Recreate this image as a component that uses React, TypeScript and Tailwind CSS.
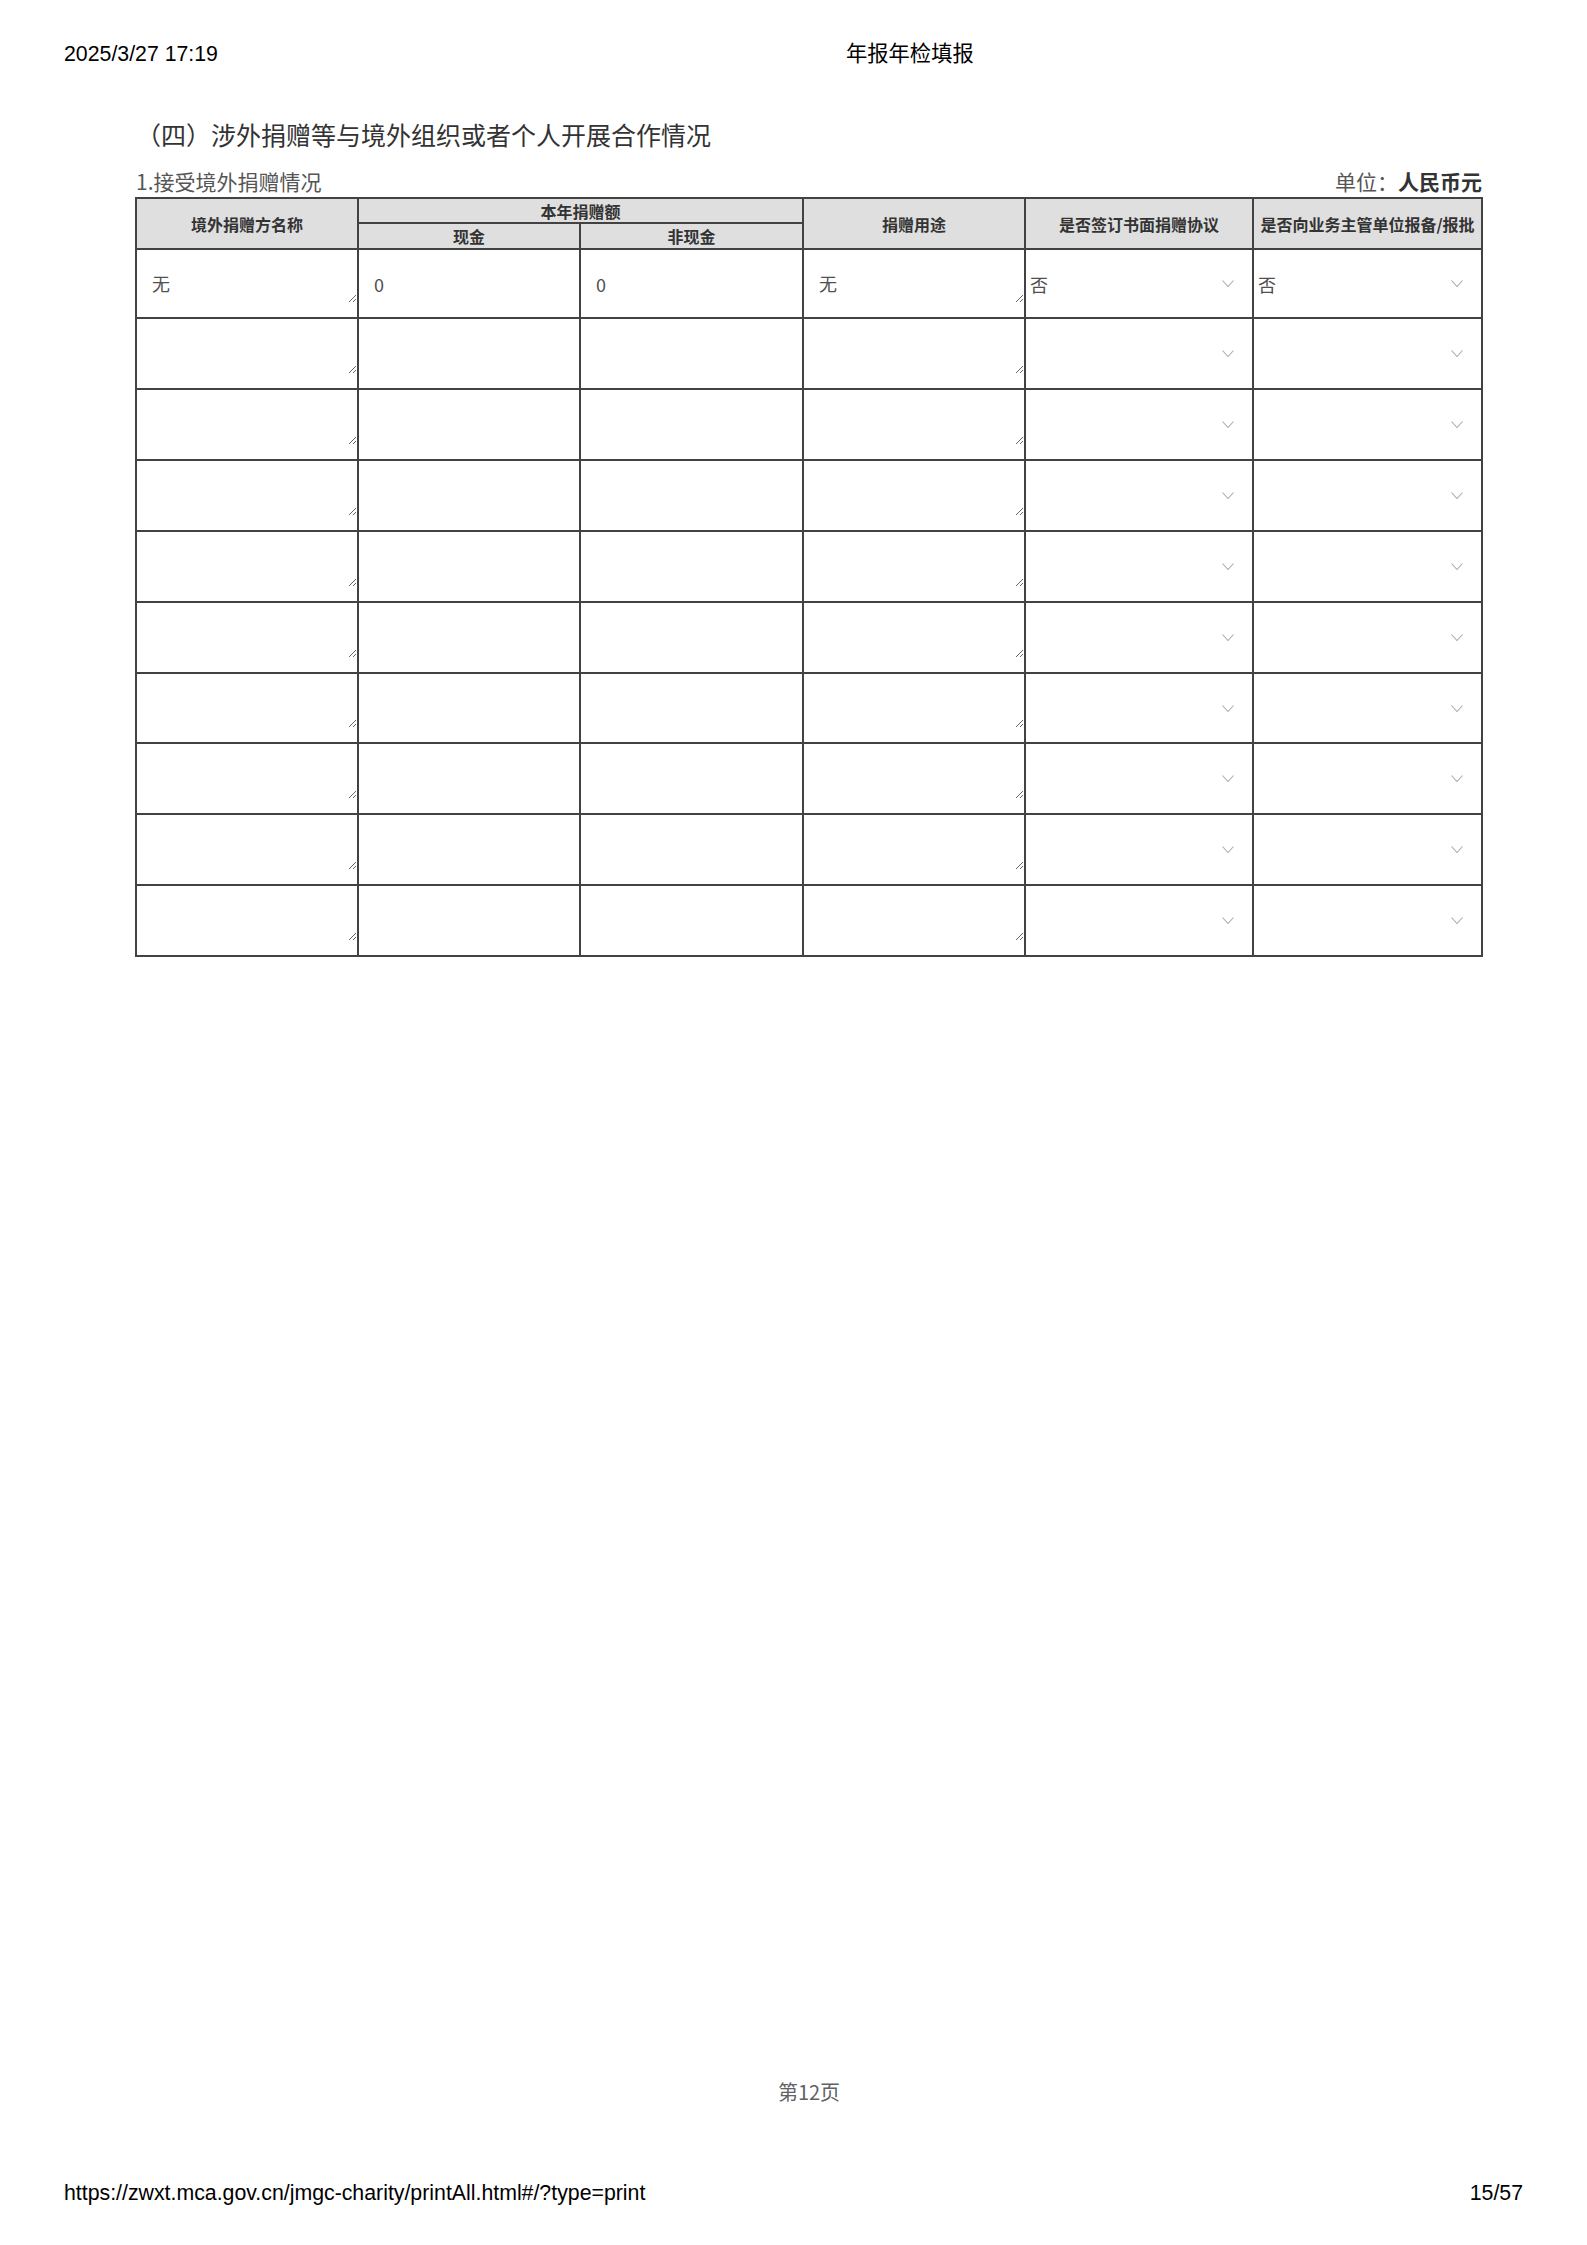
const cjk = "font-['Noto_Sans_CJK_SC',sans-serif]";
const sans = "font-['Liberation_Sans','Noto_Sans_CJK_SC',sans-serif]";

type Donation = {
  name: string;
  cash: string;
  nonCash: string;
  usage: string;
  agreement: string;
  report: string;
  h: number;
};

const heights = [69, 71, 71, 71, 71, 71, 70, 71, 71, 71];

const rows: Donation[] = heights.map((h, i) =>
  i === 0
    ? { name: "无", cash: "0", nonCash: "0", usage: "无", agreement: "否", report: "否", h }
    : { name: "", cash: "", nonCash: "", usage: "", agreement: "", report: "", h }
);

function Chevron() {
  return (
    <svg width="12" height="7" viewBox="0 0 12 7" className="shrink-0">
      <polyline points="0.5,0.5 6,6.5 11.5,0.5" fill="none" stroke="#a8abb2" strokeWidth="1.1" />
    </svg>
  );
}

function TextCell({ value, h }: { value: string; h: number }) {
  return (
    <td className="p-0 align-top border-r-2 border-b-2 border-[#424242]">
      <textarea
        readOnly
        defaultValue={value}
        style={{ height: h - 16 }}
        className="block w-full bg-white px-[15px] pt-[21px] pb-0 text-[18px] leading-[24px] text-[#505050] outline-none"
      />
    </td>
  );
}

function InputCell({ value }: { value: string }) {
  return (
    <td className="p-0 align-middle border-r-2 border-b-2 border-[#424242]">
      <input
        readOnly
        defaultValue={value}
        className="block w-full bg-white px-[15px] text-[18px] leading-[24px] text-[#505050] outline-none"
      />
    </td>
  );
}

function SelectCell({ value }: { value: string }) {
  return (
    <td className="p-0 align-middle border-r-2 border-b-2 border-[#424242]">
      <div className="flex items-center justify-between pl-[4px] pr-[18px] h-[24px]">
        <span className="text-[18px] leading-[24px] text-[#505050]">{value}</span>
        <Chevron />
      </div>
    </td>
  );
}

export default function App() {
  const th = "p-0 bg-[#dfdfdf] border-r-2 border-b-2 border-[#424242] text-[16px] font-bold leading-none text-[#333] text-center";
  return (
    <div className={`w-[1587px] h-[2245px] bg-white flex flex-col ${cjk}`}>
      {/* print header */}
      <div className={`flex flex-row items-center px-[64px] pt-[42px] text-[21.3px] leading-[24px] text-black ${sans}`}>
        <p>2025/3/27 17:19</p>
        <p className="ml-[628px]">年报年检填报</p>
      </div>

      <div className="ml-[136px] w-[1346px] flex flex-col">
        <h2 className="mt-[51px] text-[25px] leading-[34px] text-[#333] font-normal">
          （四）涉外捐赠等与境外组织或者个人开展合作情况
        </h2>

        <div className="mt-[16px] mb-[2px] flex flex-row items-center justify-between text-[21px] leading-[28px]">
          <p className="text-[#555]">1.接受境外捐赠情况</p>
          <p className="text-[#555]">
            单位：<span className="font-bold text-[#333]">人民币元</span>
          </p>
        </div>

        <table className="-ml-px w-[1348px] table-fixed border-separate border-spacing-0 border-t-2 border-l-2 border-[#424242]">
          <colgroup>
            <col className="w-[222px]" />
            <col className="w-[222px]" />
            <col className="w-[223px]" />
            <col className="w-[222px]" />
            <col className="w-[228px]" />
            <col className="w-[229px]" />
          </colgroup>
          <thead>
            <tr className="h-[25px]">
              <th rowSpan={2} className={th}>境外捐赠方名称</th>
              <th colSpan={2} className={th}>本年捐赠额</th>
              <th rowSpan={2} className={th}>捐赠用途</th>
              <th rowSpan={2} className={th}>是否签订书面捐赠协议</th>
              <th rowSpan={2} className={th}>是否向业务主管单位报备/报批</th>
            </tr>
            <tr className="h-[26px]">
              <th className={th}>现金</th>
              <th className={th}>非现金</th>
            </tr>
          </thead>
          <tbody>
            {rows.map((r, i) => (
              <tr key={i} style={{ height: r.h }}>
                <TextCell value={r.name} h={r.h} />
                <InputCell value={r.cash} />
                <InputCell value={r.nonCash} />
                <TextCell value={r.usage} h={r.h} />
                <SelectCell value={r.agreement} />
                <SelectCell value={r.report} />
              </tr>
            ))}
          </tbody>
        </table>
      </div>

      <div className="mt-auto ml-[136px] w-[1346px] text-center text-[20px] leading-[28px] text-[#606266]">
        第12页
      </div>

      <div className={`mt-[75px] mb-[40px] flex flex-row items-center justify-between px-[64px] text-[21.3px] leading-[24px] text-black ${sans}`}>
        <p>https://zwxt.mca.gov.cn/jmgc-charity/printAll.html#/?type=print</p>
        <p>15/57</p>
      </div>
    </div>
  );
}
